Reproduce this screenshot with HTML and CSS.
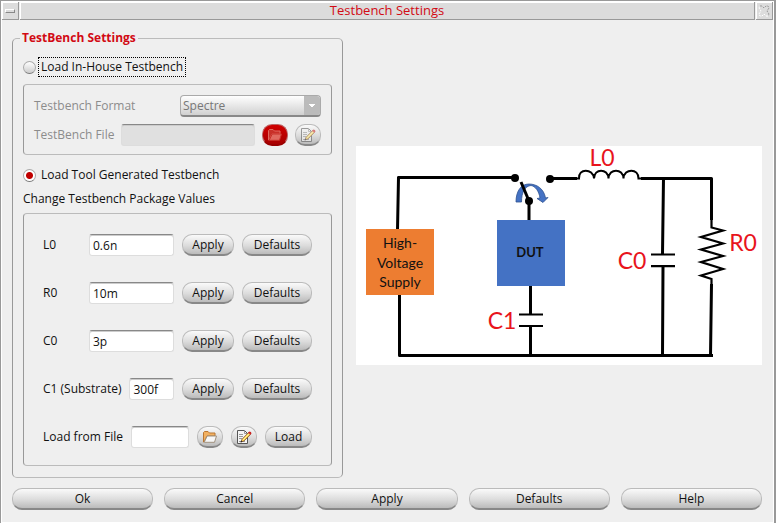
FILE: index.html
```html
<!DOCTYPE html>
<html lang="en">
<head>
<meta charset="utf-8">
<title>Testbench Settings</title>
<link rel="stylesheet" href="styles.css">
</head>
<body>
<svg class="defs" aria-hidden="true">
  <symbol id="folder" viewBox="0 0 14 12">
    <path class="folder-back" d="M.5 11V1.5L1.5.5H5L6.5 2H12V5H4L1 11Z"/>
    <path class="folder-front" d="M4.2 5H13.5L11.5 11.3H1.2Z"/>
  </symbol>
  <symbol id="edit" viewBox="0 0 16 16">
    <path d="M1.5 1.500H8.500L11.500 4.500V14.500H1.500Z" fill="#f4f4f4" stroke="#555"/>
    <path d="M8.500 1.500V4.500H11.500M3 5.500H7M3 7.500H7M3 9.500H6M3 12.500H9" fill="none" stroke="#999"/>
    <path d="M5 13L6 10.200L12.500 3.500L14.500 5.500L8 12Z" fill="#f8cf3c" stroke="#743" stroke-width=".7"/>
    <path d="M12 4L13.300 2.500Q15.500 2.500 15.500 4.500L14.200 5.800Z" fill="#c22"/>
    <path d="M6.800 11.200L13 4.800" stroke="#fff3b0"/>
    <path d="M4.500 13.500L5.200 11.500L6.500 12.800Z" fill="#222"/>
  </symbol>
</svg>
<div class="window">
  <header class="titlebar">
    <button class="title-button" type="button" aria-label="Window menu"><span class="menu-mark"></span></button>
    <h1 class="title">Testbench Settings</h1>
    <button class="title-button" type="button" aria-label="Close">
      <svg class="close-icon" viewBox="0 0 12 12" fill="none" stroke-dasharray="2 1"><path d="M2 1H4L6 3L8 1H10L11 3L9 6L11 9L10 11" stroke="#999"/><path d="M10 11H8L6 9L4 11H2L1 9L3 6L1 3L2 1" stroke="#fff"/></svg>
    </button>
  </header>
  <form class="dialog">
    <div class="content">
      <fieldset class="settings">
        <legend>TestBench Settings</legend>
        <label class="choice"><input type="radio" name="source"><span class="choice-text focused">Load In-House Testbench</span></label>
        <div class="panel house">
          <div class="row">
            <label for="format">Testbench Format</label>
            <span class="combo"><select id="format" disabled><option>Spectre</option></select></span>
          </div>
          <div class="row">
            <label for="bench-file">TestBench File</label>
            <input class="field" id="bench-file" type="text" disabled>
            <button class="button icon-button danger" type="button" aria-label="Browse testbench file" disabled><svg class="folder"><use href="#folder"/></svg></button>
            <button class="button icon-button" type="button" aria-label="Edit testbench file" disabled><svg class="edit"><use href="#edit"/></svg></button>
          </div>
        </div>
        <label class="choice"><input type="radio" name="source" checked><span class="choice-text">Load Tool Generated Testbench</span></label>
        <p class="caption">Change Testbench Package Values</p>
        <div class="panel values">
          <div class="row">
            <label for="l0">L0</label>
            <input class="field" id="l0" type="text" value="0.6n">
            <button class="button apply" type="button">Apply</button>
            <button class="button defaults" type="button">Defaults</button>
          </div>
          <div class="row">
            <label for="r0">R0</label>
            <input class="field" id="r0" type="text" value="10m">
            <button class="button apply" type="button">Apply</button>
            <button class="button defaults" type="button">Defaults</button>
          </div>
          <div class="row">
            <label for="c0">C0</label>
            <input class="field" id="c0" type="text" value="3p">
            <button class="button apply" type="button">Apply</button>
            <button class="button defaults" type="button">Defaults</button>
          </div>
          <div class="row">
            <label for="c1">C1 (Substrate)</label>
            <input class="field" id="c1" type="text" value="300f">
            <button class="button apply" type="button">Apply</button>
            <button class="button defaults" type="button">Defaults</button>
          </div>
          <div class="row">
            <label for="load-file">Load from File</label>
            <input class="field" id="load-file" type="text">
            <button class="button icon-button" type="button" aria-label="Browse file"><svg class="folder"><use href="#folder"/></svg></button>
            <button class="button icon-button" type="button" aria-label="Edit file"><svg class="edit"><use href="#edit"/></svg></button>
            <button class="button load" type="button">Load</button>
          </div>
        </div>
      </fieldset>
      <svg class="circuit" viewBox="0 0 406 219" role="img" aria-label="Testbench circuit">
        <rect width="406" height="219" fill="#fff"/>
        <g fill="none" stroke="#000" stroke-width="3" stroke-linejoin="round">
          <path d="M159 31.500H42.500L41.500 84M43.500 148V209.500H357"/>
          <path d="M194 32.500H221M285 32.500H355.500V74M355.500 138L354.500 210"/>
          <path d="M307.500 32L306.500 108M307 121L306.500 209"/>
          <path d="M173 55V75M174.500 139V168M174.500 181V209"/>
          <path d="M163 168.500H187M163 180H187M295 108.500H319M295 120.200H319" stroke-width="2.200" stroke-linejoin="miter"/>
        </g>
        <path d="M220 32.500H223C222 22 237 22 238 32.500C238 22 252 22 252.500 32.500C253 22 267 22 267.500 32.500C268 22 283 22 282.500 32.500H286" fill="none" stroke="#000" stroke-width="2"/>
        <path d="M355.500 72V81.500L367 84.500L345 91L367 97.500L345 103.500L367 110L345 116L367 123L345 129.500L355.500 133V140" fill="none" stroke="#000" stroke-width="2.200"/>
        <path d="M160 56C160 45 165 38 173 38C181 38 188 43 189.500 52L192 51.500L187 56.500L181 52.500L184 52C183 45 179 40 175 39.500C169 40 165.500 46 165.500 56Z" fill="#4472c4" stroke="#2f528f" stroke-width=".8"/>
        <path d="M165 36L173 55" stroke="#000" stroke-width="3"/>
        <g fill="#000"><circle cx="159" cy="32" r="4"/><circle cx="194" cy="33" r="4"/><circle cx="173" cy="55" r="4"/></g>
        <rect x="10" y="83" width="68" height="66" fill="#ed7d31"/>
        <rect x="141" y="74" width="68" height="66" fill="#4472c4"/>
        <g class="block-text">
          <text x="44" y="102">High-</text><text x="44" y="122">Voltage</text><text x="44" y="141">Supply</text>
          <text class="dut" x="174" y="111">DUT</text>
        </g>
        <g class="part-text">
          <text x="246" y="20">L0</text><text x="276" y="123">C0</text><text x="387" y="105">R0</text><text x="146" y="183">C1</text>
        </g>
      </svg>
    </div>
    <footer class="actions">
      <button class="button" type="button">Ok</button>
      <button class="button" type="button">Cancel</button>
      <button class="button" type="button">Apply</button>
      <button class="button" type="button">Defaults</button>
      <button class="button" type="button">Help</button>
    </footer>
  </form>
</div>
</body>
</html>
```

FILE: styles.css
```css
* { box-sizing: border-box; }

body {
  margin: 0;
  background: #efefef;
  color: #111;
  font: 12px/18px "Open Sans", "Noto Sans", sans-serif;
}

button, input, select { font: inherit; color: inherit; margin: 0; }

.defs { position: absolute; width: 0; height: 0; }

.window {
  min-height: 100vh;
  display: flex;
  flex-direction: column;
  border: 1px solid #999;
  border-right-width: 2px;
  box-shadow: inset 0 0 0 1px #fff;
  padding: 1px;
}

.titlebar { display: flex; gap: 1px; height: 18px; }

.title, .title-button {
  margin: 0;
  background: #dcdcdc;
  border: solid #999;
  border-width: 0 1px 1px 0;
  box-shadow: inset 1px 1px #fff;
}

.title {
  flex: 1;
  color: #d20a14;
  font-size: 13px;
  font-weight: 400;
  line-height: 16px;
  text-align: center;
}

.title-button {
  width: 17px;
  padding: 0;
  display: grid;
  place-items: center;
}

.menu-mark {
  width: 10px;
  height: 4px;
  border: 1px solid #fff;
  border-right-color: #888;
  border-bottom-color: #888;
}

.close-icon { width: 12px; height: 12px; }

.dialog {
  flex: 1;
  display: flex;
  flex-direction: column;
  gap: 10px;
  padding: 9px 11px 12px 10px;
}

.content {
  display: grid;
  grid-template-columns: 331px minmax(0, 1fr);
  gap: 13px;
  align-items: center;
}

.settings {
  min-width: 0;
  margin: 0;
  padding: 10px 10px 11px;
  border: 1px solid #999;
  border-top-color: #bbb;
  border-bottom-color: #bbb;
  border-radius: 5px;
}

legend {
  margin-left: -3px;
  padding: 0 2px;
  color: #d20a14;
  font-weight: 700;
}

.choice { display: flex; align-items: center; gap: 2px; height: 20px; }

.choice input {
  appearance: none;
  flex: none;
  width: 13px;
  height: 13px;
  border: 1px solid #aaa;
  border-bottom-color: #777;
  border-radius: 50%;
  background: linear-gradient(#fff, #ccc);
}

.choice input:checked {
  background: radial-gradient(circle, #c00000 0 3px, #fff 4px);
}

.choice-text { padding: 0 2px; border: 1px solid transparent; }
.choice-text.focused { border: 1px dotted #000; }

.panel {
  display: flex;
  flex-direction: column;
  border: 1px solid #999;
  border-top-color: #bbb;
  border-bottom-color: #bbb;
  border-radius: 4px;
}

.house {
  gap: 7px;
  margin: 7px 0 10px;
  padding: 10px 10px 8px;
  color: #8c8c8c;
}

.values { gap: 26px; padding: 20px 19px 17px; }

.caption { margin: 5px 0; }

.row { display: flex; align-items: center; gap: 8px; height: 22px; }
.values label { min-width: 38px; white-space: nowrap; }

.field {
  flex: 1;
  min-width: 0;
  height: 22px;
  padding: 0 3px;
  border: 1px solid #ddd;
  border-top: 1px solid #888;
  border-radius: 3px;
  background: #fff;
  box-shadow: inset 0 1px #ccc;
}

.house .row { gap: 7px; }
.field:disabled { background: #e0e0e0; }

.combo {
  display: flex;
  position: relative;
  width: 141px;
  height: 22px;
  margin-left: auto;
}

.combo select {
  appearance: none;
  width: 100%;
  padding: 0 20px 0 2px;
  border: 1px solid #aaa;
  border-bottom: 2px solid #888;
  border-radius: 4px;
  background: linear-gradient(#fff, #d0d0d0);
  color: #777;
  opacity: 1;
}

.combo::after {
  content: "";
  position: absolute;
  inset: 1px 1px 2px auto;
  width: 16px;
  border-radius: 0 3px 3px 0;
  background: linear-gradient(#fff, #fff) 5px 9px / 6px 3px no-repeat, #bbb;
  background: conic-gradient(from -45deg at 50% 62%, #fff 90deg, transparent 0) 5px 8px / 6px 5px no-repeat, #bbb;
}

.button {
  height: 22px;
  padding: 0;
  border: 1px solid #bbb;
  border-bottom: 2px solid #888;
  border-radius: 10px;
  background: linear-gradient(#fafafa, #dcdcdc 55%, #bbb);
  line-height: 18px;
  text-align: center;
}

.apply { width: 52px; }
.defaults { width: 70px; }
.load { width: 47px; }

.icon-button {
  display: grid;
  place-items: center;
  width: 26px;
}

.danger {
  background: linear-gradient(#d00000, #a80000);
  border-color: #b66;
  border-bottom-color: #900;
}

.folder { width: 14px; height: 12px; --back: #f2b060; --line: #b97632; --front: #f7f7f7; --edge: #a0917f; }
.danger .folder { --back: #c83028; --line: #e06a60; --front: #e06a60; --edge: #c83028; }
.folder-back { fill: var(--back); stroke: var(--line); }
.folder-front { fill: var(--front); stroke: var(--edge); }
.edit { width: 16px; height: 16px; }
.icon-button:disabled .edit { opacity: .55; }

.circuit { display: block; width: 100%; height: auto; margin-top: 4px; }
.circuit text { text-anchor: middle; font-family: Lato, "Open Sans", sans-serif; }
.block-text { font-size: 14px; fill: #111; }
.block-text .dut { font-size: 13px; font-weight: 700; }
.part-text { font-size: 23px; fill: #e8141c; }

.actions { display: grid; grid-template-columns: repeat(5, minmax(0, 1fr)); gap: 11px; }
```
